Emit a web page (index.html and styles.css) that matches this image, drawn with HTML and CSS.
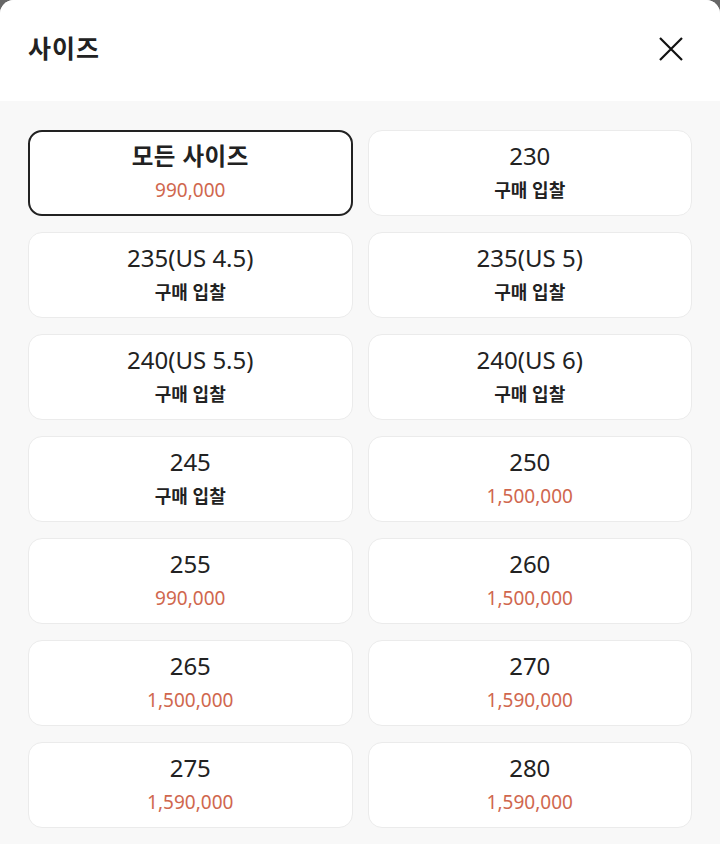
FILE: index.html
```html
<!DOCTYPE html>
<html lang="ko">
<head>
    <meta charset="UTF-8">
    <meta name="viewport" content="width=device-width, initial-scale=1.0">
    <title>사이즈</title>
    <link rel="stylesheet" href="styles.css">
</head>
<body>
    <div class="sheet">
        <div class="sheetHead">
            <h2>사이즈</h2>
            <button class="closeBtn" aria-label="닫기">
                <svg width="26" height="26" viewBox="0 0 26 26">
                    <path d="M2 2L24 24M24 2L2 24" stroke="#111" stroke-width="2.2" fill="none"/>
                </svg>
            </button>
        </div>

        <div class="sizeList">
            <div class="sizeItem active">
                <p class="size all">모든 사이즈</p>
                <p class="price">990,000</p>
            </div>
            <div class="sizeItem">
                <p class="size">230</p>
                <p class="bid">구매 입찰</p>
            </div>
            <div class="sizeItem">
                <p class="size">235(US 4.5)</p>
                <p class="bid">구매 입찰</p>
            </div>
            <div class="sizeItem">
                <p class="size">235(US 5)</p>
                <p class="bid">구매 입찰</p>
            </div>
            <div class="sizeItem">
                <p class="size">240(US 5.5)</p>
                <p class="bid">구매 입찰</p>
            </div>
            <div class="sizeItem">
                <p class="size">240(US 6)</p>
                <p class="bid">구매 입찰</p>
            </div>
            <div class="sizeItem">
                <p class="size">245</p>
                <p class="bid">구매 입찰</p>
            </div>
            <div class="sizeItem">
                <p class="size">250</p>
                <p class="price">1,500,000</p>
            </div>
            <div class="sizeItem">
                <p class="size">255</p>
                <p class="price">990,000</p>
            </div>
            <div class="sizeItem">
                <p class="size">260</p>
                <p class="price">1,500,000</p>
            </div>
            <div class="sizeItem">
                <p class="size">265</p>
                <p class="price">1,500,000</p>
            </div>
            <div class="sizeItem">
                <p class="size">270</p>
                <p class="price">1,590,000</p>
            </div>
            <div class="sizeItem">
                <p class="size">275</p>
                <p class="price">1,590,000</p>
            </div>
            <div class="sizeItem">
                <p class="size">280</p>
                <p class="price">1,590,000</p>
            </div>
            <!-- 아래는 스크롤 영역 (카드 윗선만 보임) -->
            <div class="sizeItem"></div>
            <div class="sizeItem"></div>
        </div>
    </div>
</body>
</html>
```

FILE: styles.css
```css
*{
    margin: 0;
    padding: 0;
    box-sizing: border-box;
}
body{
    height: 844px;
    overflow: hidden;
    background: #666;
    font-family: "Noto Sans", "Noto Sans CJK KR", sans-serif;
    color: #222;
}
.sheet{
    height: 100%;
    border-radius: 14px 14px 0 0;
    overflow: hidden;
    background: #f8f8f8;
}
/* 상단 제목 */
.sheetHead{
    height: 101px;
    background: #fff;
    display: flex;
    align-items: center;
    justify-content: space-between;
    padding: 0 36px 7px 28px;
}
.sheetHead h2{
    font-size: 25px;
    font-weight: 700;
    color: #222;
    letter-spacing: 1px;
}
.closeBtn{
    background: transparent;
    border: none;
    outline: none;
    display: flex;
    margin-top: 3px;
}
/* 사이즈 목록 */
.sizeList{
    display: grid;
    grid-template-columns: 1fr 1fr;
    gap: 16px 15px;
    padding: 29px 28px 0 28px;
}
.sizeItem{
    height: 86px;
    background: #fff;
    border: 1px solid #ebebeb;
    border-radius: 14px;
    display: flex;
    flex-direction: column;
    align-items: center;
    justify-content: center;
    gap: 6px;
}
.sizeItem.active{
    border: 2px solid #222;
}
.size{
    font-size: 24px;
    line-height: 28px;
    color: #222;
}
.size.all{
    font-size: 23.5px;
    font-weight: 700;
    letter-spacing: 0.5px;
}
.price{
    font-size: 19px;
    line-height: 28px;
    color: #d0674e;
}
.bid{
    font-size: 18px;
    line-height: 28px;
    font-weight: 700;
    color: #222;
}
```
